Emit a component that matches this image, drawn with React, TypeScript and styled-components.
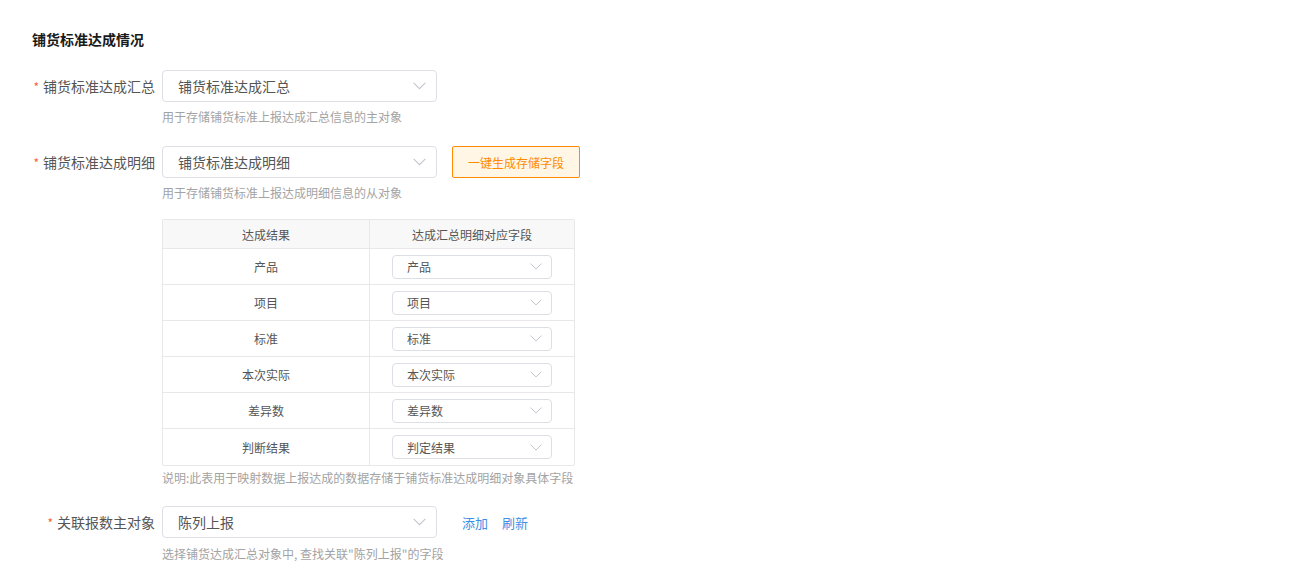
import React from "react";
import styled, { createGlobalStyle } from "styled-components";

const Global = createGlobalStyle`
  html, body { margin: 0; padding: 0; background: #fff; }
  body { font-family: "Noto Sans CJK SC", "Noto Sans", sans-serif; -webkit-font-smoothing: antialiased; }
  * { box-sizing: border-box; }
`;

const Page = styled.div`
  padding: 28px 32px 0 32px;
`;

const Title = styled.div`
  font-size: 14px;
  font-weight: 700;
  color: #1a1a1a;
  line-height: 22px;
  margin-bottom: 20px;
`;

const Row = styled.div<{ $gap?: number }>`
  display: grid;
  grid-template-columns: 130px auto;
  margin-bottom: ${(p) => p.$gap ?? 0}px;
`;

const Label = styled.div`
  height: 32px;
  display: flex;
  align-items: center;
  justify-content: flex-end;
  padding-right: 7px;
  font-size: 14px;
  color: #555;
  white-space: nowrap;
`;

const Star = styled.span`
  color: #f5643c;
  font-size: 12px;
  margin-right: 4px;
`;

const Field = styled.div`
  display: flex;
  flex-direction: column;
`;

const Line = styled.div`
  display: flex;
  align-items: center;
`;

const SelectBox = styled.div<{ $small?: boolean }>`
  width: ${(p) => (p.$small ? 160 : 275)}px;
  height: ${(p) => (p.$small ? 24 : 32)}px;
  border: 1px solid #dcdfe6;
  border-radius: 4px;
  display: flex;
  align-items: center;
  justify-content: space-between;
  padding: ${(p) => (p.$small ? "0 9px 0 14px" : "0 10px 0 15px")};
  font-size: ${(p) => (p.$small ? 12 : 14)}px;
  color: #555;
  background: #fff;
`;

const Help = styled.div<{ $mt?: number }>`
  font-size: 12px;
  color: #a3a3a3;
  line-height: 18px;
  margin-top: ${(p) => p.$mt ?? 6}px;
`;

const OrangeButton = styled.button`
  margin-left: 15px;
  width: 128px;
  height: 32px;
  border: 1px solid #ff8a00;
  background: #fff6e6;
  color: #ff8a00;
  font-size: 12px;
  border-radius: 2px;
  font-family: inherit;
  padding: 0;
`;

const Link = styled.a<{ $first?: boolean }>`
  font-size: 13px;
  color: #3d8fe6;
  margin-left: ${(p) => (p.$first ? 25 : 14)}px;
  cursor: pointer;
`;

const Table = styled.div`
  margin-top: 17px;
  width: 413px;
  border: 1px solid #e8e8e8;
  border-radius: 2px;
  display: grid;
  grid-template-columns: 206px 205px;
`;

const HeadCell = styled.div<{ $last?: boolean }>`
  height: 29px;
  background: #f8f8f8;
  border-left: ${(p) => (p.$last ? "1px solid #e8e8e8" : "none")};
  border-bottom: 1px solid #e8e8e8;
  display: flex;
  align-items: center;
  justify-content: center;
  font-size: 12px;
  color: #555;
`;

const Cell = styled.div<{ $last?: boolean; $bottom?: boolean }>`
  height: 36px;
  border-left: ${(p) => (p.$last ? "1px solid #e8e8e8" : "none")};
  border-bottom: ${(p) => (p.$bottom ? "none" : "1px solid #e8e8e8")};
  display: flex;
  align-items: center;
  justify-content: center;
  font-size: 12px;
  color: #555;
`;

const Chevron = ({ small }: { small?: boolean }) => (
  <svg width={small ? 12 : 13} height={small ? 7 : 8} viewBox="0 0 12 7" fill="none">
    <path d="M0.6 0.6 L6 6 L11.4 0.6" stroke="#c3c6cc" strokeWidth="1" />
  </svg>
);

const Select = ({ value, small }: { value: string; small?: boolean }) => (
  <SelectBox $small={small}>
    <span>{value}</span>
    <Chevron small={small} />
  </SelectBox>
);

const rows: [string, string][] = [
  ["产品", "产品"],
  ["项目", "项目"],
  ["标准", "标准"],
  ["本次实际", "本次实际"],
  ["差异数", "差异数"],
  ["判断结果", "判定结果"],
];

export default function App() {
  return (
    <Page>
      <Global />
      <Title>铺货标准达成情况</Title>

      <Row $gap={20}>
        <Label>
          <Star>*</Star>铺货标准达成汇总
        </Label>
        <Field>
          <Select value="铺货标准达成汇总" />
          <Help>用于存储铺货标准上报达成汇总信息的主对象</Help>
        </Field>
      </Row>

      <Row $gap={19}>
        <Label>
          <Star>*</Star>铺货标准达成明细
        </Label>
        <Field>
          <Line>
            <Select value="铺货标准达成明细" />
            <OrangeButton>一键生成存储字段</OrangeButton>
          </Line>
          <Help>用于存储铺货标准上报达成明细信息的从对象</Help>
          <Table>
            <HeadCell>达成结果</HeadCell>
            <HeadCell $last>达成汇总明细对应字段</HeadCell>
            {rows.map(([a, b], i) => (
              <React.Fragment key={a}>
                <Cell $bottom={i === rows.length - 1}>{a}</Cell>
                <Cell $last $bottom={i === rows.length - 1}>
                  <Select value={b} small />
                </Cell>
              </React.Fragment>
            ))}
          </Table>
          <Help $mt={3}>说明:此表用于映射数据上报达成的数据存储于铺货标准达成明细对象具体字段</Help>
        </Field>
      </Row>

      <Row>
        <Label>
          <Star>*</Star>关联报数主对象
        </Label>
        <Field>
          <Line>
            <Select value="陈列上报" />
            <Link $first>添加</Link>
            <Link>刷新</Link>
          </Line>
          <Help $mt={7}>选择铺货达成汇总对象中, 查找关联"陈列上报"的字段</Help>
        </Field>
      </Row>
    </Page>
  );
}
